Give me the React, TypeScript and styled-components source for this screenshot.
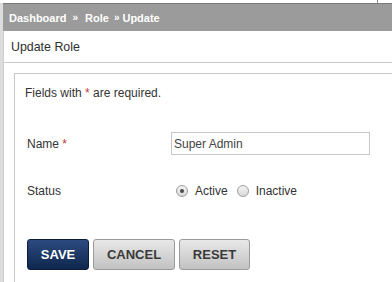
import React from 'react';
import styled, {createGlobalStyle, css} from 'styled-components';

const GlobalStyle = createGlobalStyle`
    html, body {
        margin: 0;
        padding: 0;
        background: #ffffff;
    }
    body {
        font-family: "Liberation Sans", Arial, sans-serif;
        color: #333333;
        overflow: hidden;
    }
`;

const Page = styled.div`
    width: 392px;
    height: 282px;
    display: flex;
    flex-direction: column;
    overflow: hidden;
`;

const TopStrip = styled.div`
    height: 3px;
    display: flex;
`;

const Tick = styled.span`
    margin-left: 377px;
    width: 1px;
    background: #8a8a8a;
`;

const Body = styled.div`
    flex: 1;
    display: flex;
`;

const LeftRail = styled.div`
    width: 3px;
    background-color: #ececec;
    background-image: radial-gradient(circle, #c9c9c9 0.6px, transparent 0.8px);
    background-size: 2px 2px;
`;

const Main = styled.div`
    flex: 1;
    display: flex;
    flex-direction: column;
`;

const Breadcrumbs = styled.div`
    height: 27px;
    border-top: 1px solid #7a7a7a;
    background: #9b9b9b;
    display: flex;
    align-items: center;
    padding-left: 6px;
    font-size: 11px;
    font-weight: bold;
    color: #ffffff;
`;

const Crumb = styled.span``;

const Sep = styled.span<{ $wide?: boolean }>`
    font-size: 10px;
    margin: ${p => (p.$wide ? '0 7px 0 6px' : '0 3px 0 5px')};
`;

const Panel = styled.div`
    flex: 1;
    background: #ffffff;
    border-left: 1px solid #cfcfcf;
    display: flex;
    flex-direction: column;
`;

const PanelHeader = styled.div`
    height: 31px;
    border-bottom: 1px solid #c8c8c8;
    display: flex;
    align-items: center;
    padding-left: 7px;
    font-size: 12.4px;
    color: #2e2e2e;
`;

const PanelBody = styled.div`
    flex: 1;
    padding: 10px 0 0 10px;
    display: flex;
`;

const FormBox = styled.div`
    flex: 1;
    border-top: 1px solid #c8c8c8;
    border-left: 1px solid #c8c8c8;
    padding: 12px 0 0 10px;
    font-size: 12px;
`;

const Note = styled.p`
    margin: 0;
    line-height: 14px;
`;

const Req = styled.span`
    color: #c0392b;
`;

const FormGrid = styled.div`
    display: grid;
    grid-template-columns: 144px 199px;
    grid-auto-rows: 23px;
    row-gap: 24px;
    margin-top: 32px;
    padding-left: 2px;
    align-items: center;
`;

const Label = styled.label`
    line-height: 14px;
`;

const TextInput = styled.input`
    box-sizing: border-box;
    width: 199px;
    height: 23px;
    border: 1px solid #c6c6c6;
    padding: 0 0 0 2px;
    font-family: "Liberation Sans", Arial, sans-serif;
    font-size: 12px;
    color: #444444;
    outline: none;
`;

const RadioGroup = styled.div`
    display: flex;
    align-items: center;
    padding-left: 5px;
`;

const RadioOption = styled.span`
    display: flex;
    align-items: center;
    gap: 7px;
    margin-right: 9px;
`;

const RadioMark = styled.span<{ $checked?: boolean }>`
    box-sizing: border-box;
    width: 12px;
    height: 12px;
    border-radius: 50%;
    border: 1px solid #9d9d9d;
    background: linear-gradient(#f4f4f4, #d9d9d9);
    display: flex;
    align-items: center;
    justify-content: center;
    &::after {
        content: '';
        width: 4px;
        height: 4px;
        border-radius: 50%;
        background: ${p => (p.$checked ? '#4a4a4a' : 'transparent')};
    }
`;

const Actions = styled.div`
    display: flex;
    gap: 4px;
    margin-top: 37px;
    padding-left: 2px;
`;

const Button = styled.button<{ $primary?: boolean; $w: number }>`
    box-sizing: border-box;
    width: ${p => p.$w}px;
    height: 31px;
    border-radius: 3px;
    font-family: "Liberation Sans", Arial, sans-serif;
    font-size: 13px;
    font-weight: bold;
    cursor: pointer;
    ${p =>
        p.$primary
            ? css`
                  color: #ffffff;
                  border: 1px solid #0b1d3a;
                  background: linear-gradient(#2c4b80, #0f274d);
              `
            : css`
                  color: #3a3a3a;
                  border: 1px solid #9a9a9a;
                  background: linear-gradient(#e8e8e8, #c2c2c2);
              `}
`;

export default function App() {
    return (
        <>
            <GlobalStyle />
            <Page>
                <TopStrip>
                    <Tick />
                </TopStrip>
                <Body>
                    <LeftRail />
                    <Main>
                        <Breadcrumbs>
                            <Crumb>Dashboard</Crumb>
                            <Sep $wide>»</Sep>
                            <Crumb>Role</Crumb>
                            <Sep>»</Sep>
                            <Crumb>Update</Crumb>
                        </Breadcrumbs>
                        <Panel>
                            <PanelHeader>Update Role</PanelHeader>
                            <PanelBody>
                                <FormBox>
                                    <Note>
                                        Fields with <Req>*</Req> are required.
                                    </Note>
                                    <FormGrid>
                                        <Label>
                                            Name <Req>*</Req>
                                        </Label>
                                        <TextInput defaultValue="Super Admin" />
                                        <Label>Status</Label>
                                        <RadioGroup>
                                            <RadioOption>
                                                <RadioMark $checked />
                                                Active
                                            </RadioOption>
                                            <RadioOption>
                                                <RadioMark />
                                                Inactive
                                            </RadioOption>
                                        </RadioGroup>
                                    </FormGrid>
                                    <Actions>
                                        <Button $primary $w={62}>SAVE</Button>
                                        <Button $w={82}>CANCEL</Button>
                                        <Button $w={71}>RESET</Button>
                                    </Actions>
                                </FormBox>
                            </PanelBody>
                        </Panel>
                    </Main>
                </Body>
            </Page>
        </>
    );
}
